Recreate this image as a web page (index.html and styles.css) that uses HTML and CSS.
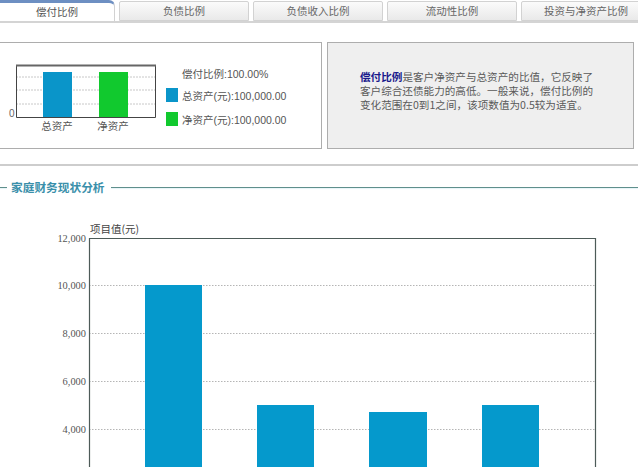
FILE: index.html
```html
<!DOCTYPE html>
<html lang="zh">
<head>
<meta charset="utf-8">
<link rel="stylesheet" href="styles.css">
</head>
<body>
<div class="page">
  <div class="tabs">
    <div class="tab active">偿付比例</div>
    <div class="tab">负债比例</div>
    <div class="tab">负债收入比例</div>
    <div class="tab">流动性比例</div>
    <div class="tab">投资与净资产比例</div>
  </div>

  <div class="summary">
    <div class="panel chart-panel">
      <svg class="mini" width="160" height="104" viewBox="0 0 160 104">
        <line x1="16" y1="34" x2="155" y2="34" class="grid"/>
        <line x1="16" y1="47" x2="155" y2="47" class="grid"/>
        <line x1="16" y1="61" x2="155" y2="61" class="grid"/>
        <rect x="43" y="29" width="29" height="45" fill="#0a95c9"/>
        <rect x="99" y="29" width="29" height="45" fill="#11c92e"/>
        <path d="M16.5 74.5 V22.5 H155.5 V74.5 H16.5" fill="none" stroke="#444" stroke-width="1"/>
        <path d="M16 22.5 H156" stroke="#666" stroke-width="2"/>
        <text x="9" y="74" class="mini-num">0</text>
        <text x="57" y="87" class="mini-lbl" text-anchor="middle">总资产</text>
        <text x="113" y="87" class="mini-lbl" text-anchor="middle">净资产</text>
      </svg>
      <div class="legend">
        <div class="legend-title">偿付比例:100.00%</div>
        <div class="legend-row"><span class="swatch blue"></span>总资产(元):100,000.00</div>
        <div class="legend-row"><span class="swatch green"></span>净资产(元):100,000.00</div>
      </div>
    </div>
    <div class="panel note-panel">
      <p class="note"><b class="term">偿付比例</b>是客户净资产与总资产的比值，它反映了<br>客户综合还债能力的高低。一般来说，偿付比例的<br>变化范围在0到1之间，该项数值为0.5较为适宜。</p>
    </div>
  </div>

  <div class="divider"></div>

  <div class="section-head">
    <span class="rule short"></span>
    <span class="section-title">家庭财务现状分析</span>
    <span class="rule long"></span>
  </div>

  <svg class="big" width="638" height="267" viewBox="0 0 638 267">
    <text x="90" y="32" class="axis-title">项目值(元)</text>
    <line x1="89" y1="84.5" x2="595" y2="84.5" class="grid2"/>
    <line x1="89" y1="132.5" x2="595" y2="132.5" class="grid2"/>
    <line x1="89" y1="180.5" x2="595" y2="180.5" class="grid2"/>
    <line x1="89" y1="228.5" x2="595" y2="228.5" class="grid2"/>
    <rect x="145" y="84" width="57" height="200" fill="#0599cc"/>
    <rect x="257" y="204" width="57" height="80" fill="#0599cc"/>
    <rect x="369" y="211" width="58" height="80" fill="#0599cc"/>
    <rect x="482" y="204" width="57" height="80" fill="#0599cc"/>
    <path d="M89.5 280 V37.5 H595.5 V280" fill="none" stroke="#4d5b58" stroke-width="1.2"/>
    <text x="86" y="41" class="ynum" text-anchor="end">12,000</text>
    <text x="86" y="88" class="ynum" text-anchor="end">10,000</text>
    <text x="86" y="136" class="ynum" text-anchor="end">8,000</text>
    <text x="86" y="184" class="ynum" text-anchor="end">6,000</text>
    <text x="86" y="232" class="ynum" text-anchor="end">4,000</text>
  </svg>
</div>
</body>
</html>
```

FILE: styles.css
```css
* { box-sizing: border-box; }
html, body { margin: 0; padding: 0; background: #fff; }
body {
  width: 638px;
  height: 467px;
  overflow: hidden;
  font-family: "Noto Sans CJK SC", "Liberation Sans", sans-serif;
  color: #555;
}
.page { width: 638px; }

.tabs {
  display: flex;
  gap: 4px;
  height: 23px;
  border-bottom: 2px solid #d4d4d4;
  overflow: hidden;
}
.tab {
  flex: 0 0 130px;
  height: 20px;
  margin-top: 1px;
  border: 1px solid #d2d2d2;
  border-radius: 2px 2px 0 0;
  background: linear-gradient(#fbfbfb, #e9e9e9);
  font-size: 10.5px;
  line-height: 18px;
  text-align: center;
  color: #666;
}
.tab.active {
  flex: 0 0 116px;
  margin-top: 0;
  height: 22px;
  margin-left: -1px;
  border-top: 3px solid #6d8fc2;
  border-radius: 0 6px 0 0;
  background: #fff;
  color: #555;
  line-height: 17px;
}

.summary {
  display: flex;
  gap: 5px;
  margin-top: 19px;
  margin-left: -1px;
}
.panel {
  height: 107px;
  border: 1px solid #adadad;
}
.chart-panel {
  width: 323px;
  background: #fff;
  display: flex;
}
.mini { display: block; flex: 0 0 160px; }
.grid { stroke: #c8c8c8; stroke-width: 1; stroke-dasharray: 2 1; }
.mini-num { font-family: "Liberation Sans", sans-serif; font-size: 10px; fill: #666; }
.mini-lbl { font-size: 10.5px; fill: #555; }

.legend {
  padding-top: 24px;
  margin-left: 6px;
  font-size: 10.5px;
  color: #555;
  font-family: "Liberation Sans", "Noto Sans CJK SC", sans-serif;
}
.legend-title { padding-left: 16px; height: 15px; line-height: 15px; }
.legend-row {
  display: flex;
  align-items: center;
  height: 22px;
  margin-top: 2px;
}
.swatch {
  display: inline-block;
  width: 12px;
  height: 14px;
  margin-right: 4px;
}
.swatch.blue { background: #0a95c9; }
.swatch.green { background: #11c92e; }

.note-panel {
  width: 307px;
  background: #efefef;
  padding: 27px 0 0 32px;
}
.note {
  margin: 0;
  font-size: 10.6px;
  line-height: 14px;
  color: #5a5a5a;
  white-space: nowrap;
}
.term { color: #1a1a8c; font-weight: bold; }

.divider {
  margin-top: 15px;
  height: 2px;
  background: #cdcdcd;
}

.section-head {
  display: flex;
  align-items: center;
  margin-top: 13px;
  height: 16px;
}
.rule {
  height: 1px;
  background: #5f8f8c;
  box-shadow: 0 1px 1px #e3f3f7;
}
.rule.short { flex: 0 0 7px; }
.rule.long { flex: 1; }
.section-title {
  margin: 0 6px 0 4px;
  font-size: 11.7px;
  font-weight: bold;
  color: #3a8faa;
  line-height: 16px;
}

.big { display: block; margin-top: 6px; }
.grid2 { stroke: #b5b5b5; stroke-width: 1; stroke-dasharray: 1.5 1.5; }
.ynum { font-family: "Liberation Serif", serif; font-size: 10.4px; fill: #555; }
.axis-title { font-size: 10.5px; fill: #444; }
```
